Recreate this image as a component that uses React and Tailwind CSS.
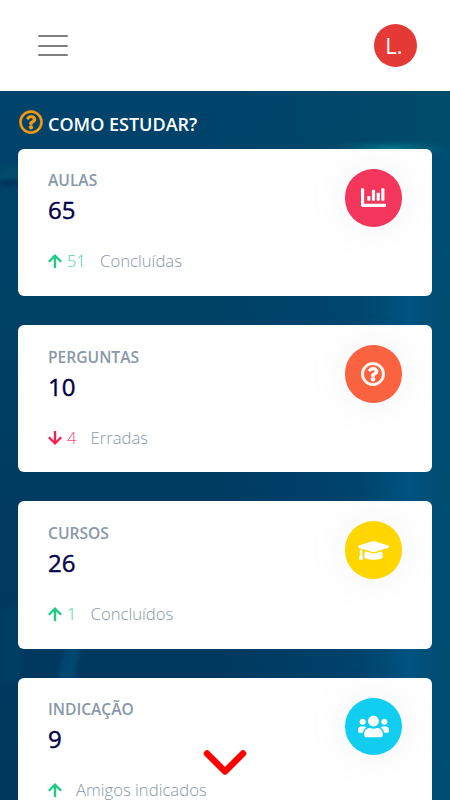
import { FaChartBar, FaGraduationCap, FaRegQuestionCircle, FaUsers } from "react-icons/fa";

const CARDS = [
    { title: "AULAS",     value: 65, up: true,  count: "51", note: "Concluídas",       Icon: FaChartBar,          color: "bg-[#f5365c]", size: 25 },
    { title: "PERGUNTAS", value: 10, up: false, count: "4",  note: "Erradas",          Icon: FaRegQuestionCircle, color: "bg-[#fb6340]", size: 24, stroke: 14 },
    { title: "CURSOS",    value: 26, up: true,  count: "1",  note: "Concluídos",       Icon: FaGraduationCap,     color: "bg-[#ffd600]", size: 31 },
    { title: "INDICAÇÃO", value: 9,  up: true,  count: "",   note: "Amigos indicados", Icon: FaUsers,             color: "bg-[#11cdef]", size: 31 },
];

const Backdrop = () => (
    <svg className="absolute inset-0 w-full h-full" viewBox="0 0 450 709" preserveAspectRatio="none" aria-hidden="true">
        <defs>
            <linearGradient id="base" x1="0" y1="0" x2="0" y2="1">
                <stop offset="0" stopColor="#00436b" />
                <stop offset=".3" stopColor="#004266" />
                <stop offset=".6" stopColor="#003a61" />
                <stop offset="1" stopColor="#00385d" />
            </linearGradient>
            <linearGradient id="top" x1="0" y1="0" x2="1" y2="0">
                <stop offset="0" stopColor="#004d6a" stopOpacity="0" />
                <stop offset="1" stopColor="#004d6a" stopOpacity=".8" />
            </linearGradient>
            <linearGradient id="side" x1="0" y1="0" x2="1" y2="0">
                <stop offset="0" stopColor="#004470" stopOpacity="0" />
                <stop offset=".6" stopColor="#004a75" stopOpacity=".6" />
                <stop offset=".83" stopColor="#005483" />
                <stop offset=".88" stopColor="#004f78" />
                <stop offset="1" stopColor="#004d70" />
            </linearGradient>
            <radialGradient id="glow">
                <stop offset="0" stopColor="#007785" />
                <stop offset="1" stopColor="#005a7d" stopOpacity="0" />
            </radialGradient>
            <filter id="soft"><feGaussianBlur stdDeviation="2" /></filter>
        </defs>
        <rect width="450" height="709" fill="url(#base)" />
        <rect x="200" y="0" width="250" height="58" fill="url(#top)" />
        <rect x="220" y="58" width="230" height="651" fill="url(#side)" />
        <ellipse cx="392" cy="57" rx="65" ry="9" fill="url(#glow)" />
        <path d="M0 77L20 74V88L0 90Z" fill="#004c6b" filter="url(#soft)" />
        <path d="M0 90L20 88V93L0 96Z" fill="#00305c" filter="url(#soft)" />
        <path d="M0 523L20 510V590H0Z" fill="#004468" opacity=".5" filter="url(#soft)" />
        <path d="M66 550H82L74 590H58Z" fill="#00466f" filter="url(#soft)" />
    </svg>
);

const Arrow = ({ up }) => (
    <svg width="14" height="14" viewBox="0 0 14 14" fill="none" stroke="currentColor" strokeWidth="2.3" className={up ? "" : "rotate-180"}>
        <path d="M7 14V2M.8 7.8L7 1.7L13.2 7.8" />
    </svg>
);

const StatCard = ({ title, value, up, count, note, Icon, color, size, stroke = 0 }) => (
    <div className="flex h-[147.2px] shrink-0 justify-between rounded-md bg-white px-[30px] pt-5">
        <div>
            <p className="-mt-[0.6px] text-[15.6px] leading-6 font-semibold text-[#8898aa]">{title}</p>
            <p className="text-2xl leading-9 font-medium text-[#000048] [-webkit-text-stroke:0.4px]">{value}</p>
            <p className="mt-[21px] flex items-center text-[16.7px] leading-6 font-light text-[#8898aa]">
                <span className={`flex items-center gap-[5px] ${up ? "text-[#17ce84]" : "text-[#f5204f]"}`}>
                    <Arrow up={up} />
                    {count && <span className="opacity-80">{count}</span>}
                </span>
                <span className="ml-[14px]">{note}</span>
            </p>
        </div>
        <div className={`flex size-[57.5px] items-center justify-center rounded-full text-white shadow-[0_0_40px_rgba(136,152,170,0.12)] ${color}`}>
            <Icon size={size} stroke="currentColor" strokeWidth={stroke} />
        </div>
    </div>
);

export default function App() {
    return (
        <div className="relative flex h-screen flex-col overflow-hidden bg-white font-['Open_Sans',sans-serif]">
            <header className="flex h-[91px] shrink-0 items-center justify-between pl-[38px] pr-[33.5px]">
                <button aria-label="Menu" className="flex w-[30px] flex-col gap-[7.5px]">
                    <span className="h-0.5 rounded-full bg-[#7f7f7f]" />
                    <span className="h-0.5 rounded-full bg-[#7f7f7f]" />
                    <span className="h-0.5 rounded-full bg-[#7f7f7f]" />
                </button>
                <div className="flex size-[43px] items-center justify-center rounded-full bg-[#e53935] text-[22px] text-white">
                    <span className="mr-0.5">L.</span>
                </div>
            </header>

            <main className="relative min-h-0 flex-1 overflow-hidden">
                <Backdrop />
                <div className="relative px-[18px]">
                    <div className="flex h-[58px] items-center gap-[5px] pl-px pt-1">
                        <FaRegQuestionCircle size={24} strokeWidth={10} stroke="currentColor" className="text-[#fb9b0c]" />
                        <h1 className="pt-1 text-lg font-semibold text-white">COMO ESTUDAR?</h1>
                    </div>
                    <div className="flex flex-col gap-[29px]">
                        {CARDS.map(c => <StatCard key={c.title} {...c} />)}
                    </div>
                </div>
            </main>

            {/* Scroll hint */}
            <svg className="absolute left-[203px] top-[749px]" width="44" height="27" viewBox="0 0 44 27" fill="none">
                <path d="M4 4.5L22 22.5L40 4.5" stroke="#ff0000" strokeWidth="6.5" strokeLinecap="round" strokeLinejoin="round" />
            </svg>
        </div>
    );
}
